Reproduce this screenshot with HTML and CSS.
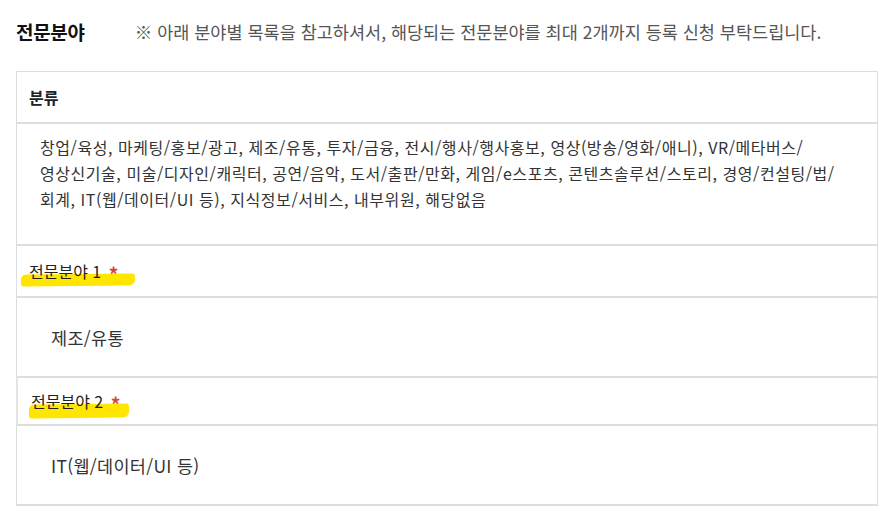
FILE: index.html
```html
<!DOCTYPE html>
<html lang="ko">
<head>
    <meta charset="UTF-8">
    <meta name="viewport" content="width=device-width, initial-scale=1.0">
    <title>전문분야</title>
    <link rel="stylesheet" href="styles.css">
</head>
<body>
    <div class="titulo">
        <h2>전문분야</h2>
        <p class="nota">※ 아래 분야별 목록을 참고하셔서, 해당되는 전문분야를 최대 2개까지 등록 신청 부탁드립니다.</p>
    </div>
    <div class="tabela">
        <div class="linha cabecalho">분류</div>
        <div class="linha lista">창업/육성, 마케팅/홍보/광고, 제조/유통, 투자/금융, 전시/행사/행사홍보, 영상(방송/영화/애니), VR/메타버스/<br>영상신기술, 미술/디자인/캐릭터, 공연/음악, 도서/출판/만화, 게임/e스포츠, 콘텐츠솔루션/스토리, 경영/컨설팅/법/<br>회계, IT(웹/데이터/UI 등), 지식정보/서비스, 내부위원, 해당없음</div>
        <div class="linha rotulo um"><span class="marca">전문분야 1 <em>*</em></span></div>
        <div class="linha valor">제조/유통</div>
        <div class="linha rotulo dois"><span class="marca">전문분야 2 <em>*</em></span></div>
        <div class="linha valor ultimo">IT(웹/데이터/UI 등)</div>
    </div>
</body>
</html>
```

FILE: styles.css
```css
body {
    font-family: "Noto Sans CJK KR", "Noto Sans", sans-serif;
    margin: 0;
    padding: 0 12px 0 16px;
    background-color: #fff;
    color: #222;
}

.titulo {
    display: flex;
    align-items: center;
    height: 63px;
    margin-bottom: 8px;
}

.titulo h2 {
    font-size: 19px;
    font-weight: bold;
    color: #111;
    margin: 0 50px 0 0;
    letter-spacing: -0.3px;
}

.nota {
    margin: 0;
    font-size: 17.5px;
    color: #555;
}

.tabela {
    border: 1px solid #dedede;
    border-bottom-width: 2px;
}

.linha {
    border-bottom: 2px solid #dedede;
    font-size: 16px;
}

.linha.ultimo {
    border-bottom: none;
}

.cabecalho {
    height: 50px;
    display: flex;
    align-items: center;
    padding-left: 12px;
    font-size: 16px;
    font-weight: bold;
    color: #222;
}

.lista {
    padding: 10px 12px 32px 23px;
    line-height: 26px;
    letter-spacing: 0.55px;
    color: #333;
}

.rotulo {
    display: flex;
    align-items: center;
    padding-left: 12px;
    color: #222;
}

.rotulo.um {
    height: 50px;
}

.rotulo.dois {
    height: 46px;
    padding-left: 13px;
    border-left: 2px solid #e4e4e4;
    margin-left: -1px;
}

.rotulo em {
    font-style: normal;
    font-size: 19px;
    line-height: 1;
    color: #d0493c;
    font-weight: bold;
    margin-left: 3px;
    position: relative;
    top: 4px;
}

.marca {
    position: relative;
    z-index: 0;
}

.marca::after {
    content: "";
    position: absolute;
    z-index: -1;
    left: -8px;
    right: -17px;
    top: 15px;
    height: 12px;
    background: #ffe600;
    border-radius: 5px 3px 6px 2px;
    transform: rotate(-0.6deg);
}

.rotulo.dois .marca::after {
    left: -2px;
    right: -9px;
    top: 15px;
    height: 14px;
}

.valor {
    height: 78px;
    display: flex;
    align-items: center;
    padding-left: 34px;
    font-size: 17.5px;
    letter-spacing: 0.3px;
    color: #333;
}
```
